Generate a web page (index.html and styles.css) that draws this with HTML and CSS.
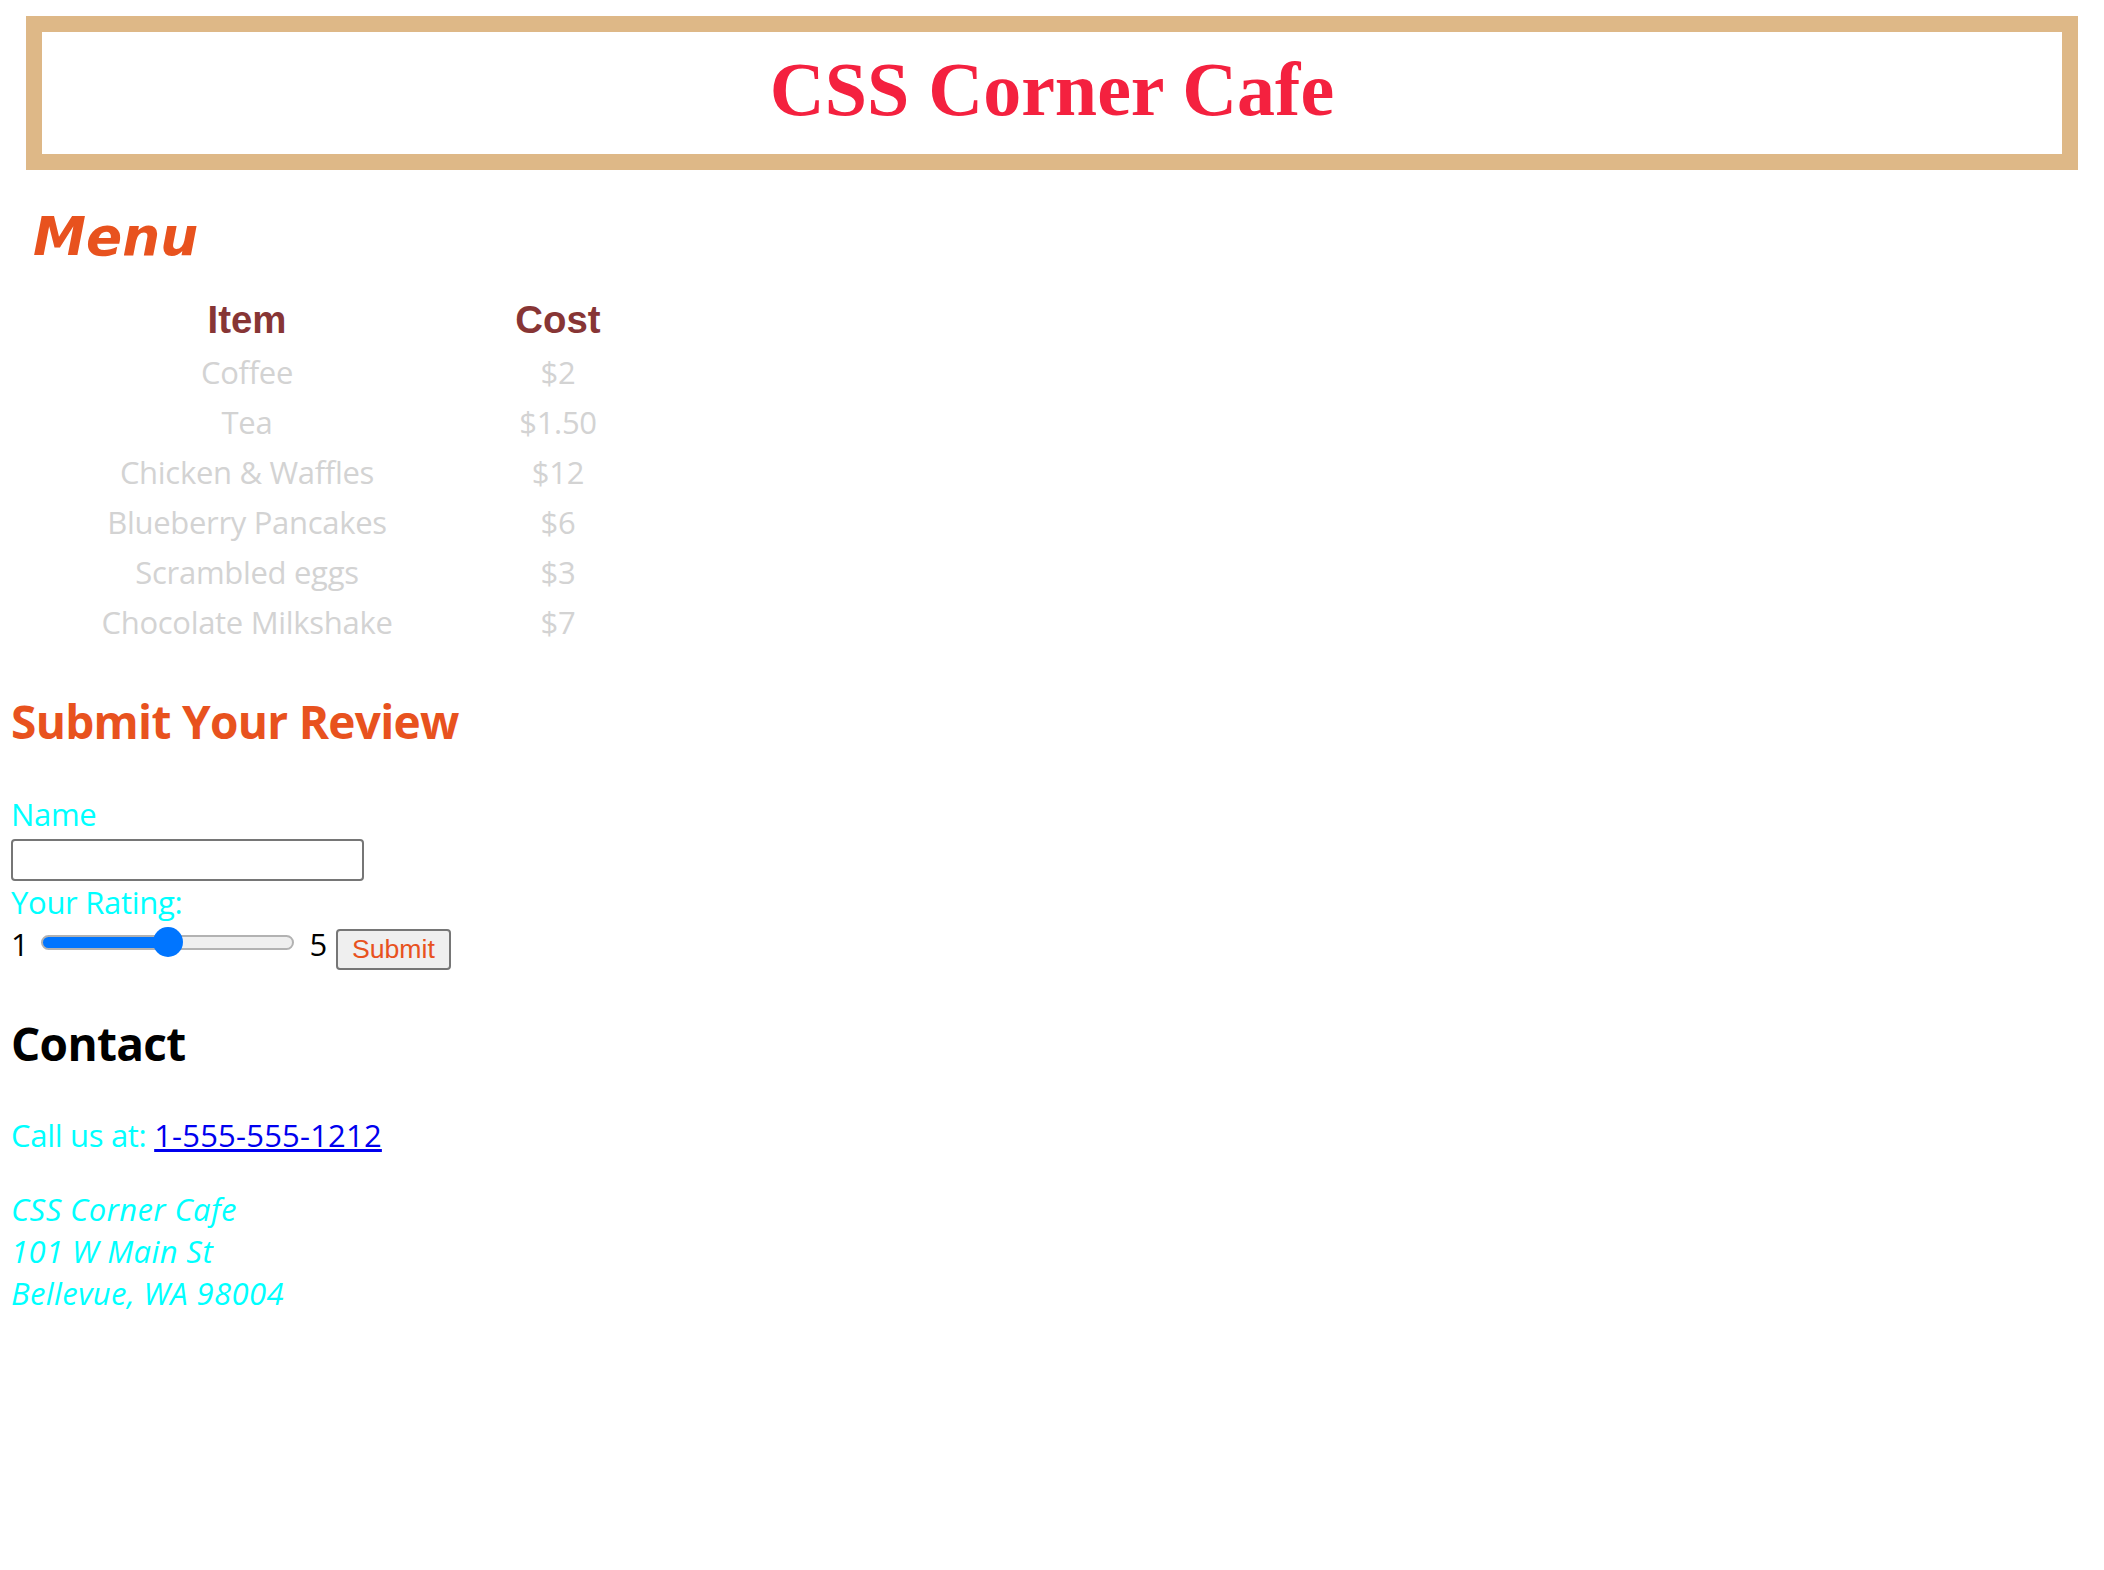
FILE: index.html
```html
<!DOCTYPE html>
<html lang="en">
<head>
<meta charset="utf-8">
<title>CSS Corner Cafe</title>
<link rel="stylesheet" href="styles.css">
</head>
<body>
<header class="banner">
  <h1 class="banner-title">CSS Corner Cafe</h1>
</header>

<section class="menu">
  <h2 class="menu-title">Menu</h2>
  <div class="menu-table">
    <div class="th">Item</div><div class="th">Cost</div>
    <div class="td">Coffee</div><div class="td">$2</div>
    <div class="td">Tea</div><div class="td">$1.50</div>
    <div class="td">Chicken &amp; Waffles</div><div class="td">$12</div>
    <div class="td">Blueberry Pancakes</div><div class="td">$6</div>
    <div class="td">Scrambled eggs</div><div class="td">$3</div>
    <div class="td">Chocolate Milkshake</div><div class="td">$7</div>
  </div>
</section>

<section class="review">
  <h2 class="section-title orange">Submit Your Review</h2>
  <form class="review-form">
    <label class="field-label" for="name">Name</label>
    <input class="text-input" id="name" type="text">
    <label class="field-label" for="rating">Your Rating:</label>
    <div class="rating-row">
      <span class="rating-end">1</span>
      <input class="range" id="rating" type="range" min="1" max="5" value="3">
      <span class="rating-end rating-max">5</span>
      <button class="submit-btn" type="button">Submit</button>
    </div>
  </form>
</section>

<section class="contact">
  <h2 class="section-title">Contact</h2>
  <p class="call">Call us at: <a href="#" class="phone">1-555-555-1212</a></p>
  <address class="address">CSS Corner Cafe<br>101 W Main St<br>Bellevue, WA 98004</address>
</section>
</body>
</html>
```
FILE: styles.css
```css
html, body {
  background: #ffffff;
}
body {
  margin: 0;
  padding: 16px 11px 40px 11px;
  font-family: "Open Sans", "Noto Sans", sans-serif;
  font-size: 31px;
  letter-spacing: -0.3px;
}

/* Banner */
.banner {
  margin: 0 15px;
  height: 122px;
  border: 16px solid #deb887;
}
.banner-title {
  margin: 0;
  text-align: center;
  font-family: "Liberation Serif", "Times New Roman", serif;
  font-weight: 700;
  font-size: 76px;
  line-height: 115px;
  letter-spacing: 0;
  color: #f4213f;
}

/* Menu */
.menu {
  margin: 0 15px;
}
.menu-title {
  margin: 36px 0 0 7px;
  font-family: "DejaVu Sans", Verdana, sans-serif;
  font-weight: 700;
  font-style: italic;
  font-size: 53.3px;
  line-height: 62px;
  letter-spacing: 0;
  color: #e8521e;
}
.menu-table {
  display: grid;
  grid-template-columns: 340px 282px;
  margin: 24px 0 0 51px;
}
.th {
  text-align: center;
  font-family: "Liberation Sans", Arial, sans-serif;
  font-weight: 700;
  font-size: 38.4px;
  line-height: 55.4px;
  letter-spacing: 0;
  color: #873535;
}
.td {
  text-align: center;
  line-height: 50px;
  color: #d3d3d3;
}

/* Review */
.section-title {
  margin: 0;
  font-weight: 700;
  font-size: 46px;
  letter-spacing: -0.7px;
  line-height: 57.6px;
  color: #000000;
}
.orange {
  color: #e8521e;
}
.review {
  margin-top: 46px;
}
.review-form {
  margin-top: 42px;
  display: flex;
  flex-direction: column;
  align-items: flex-start;
}
.field-label {
  color: #00ffff;
  line-height: 42.67px;
}
.text-input {
  box-sizing: border-box;
  width: 353px;
  height: 42px;
  margin: 3px 0 0 0;
  border: 2px solid #767676;
  border-radius: 4px;
  background: #fff;
}
.rating-row {
  display: flex;
  align-items: flex-start;
}
.rating-end {
  color: #000;
  line-height: 42.67px;
}
.range {
  -webkit-appearance: none;
  appearance: none;
  width: 253px;
  height: 30px;
  margin: 4px 0 0 13px;
  padding: 0;
  background: transparent;
}
.range::-webkit-slider-runnable-track {
  height: 15px;
  border-radius: 8px;
  box-sizing: border-box;
  border: 2px solid #b2b2b2;
  background: linear-gradient(to right, #0075ff 0 50%, #efefef 50% 100%);
}
.range::-webkit-slider-thumb {
  -webkit-appearance: none;
  appearance: none;
  width: 30px;
  height: 30px;
  margin-top: -9.5px;
  border-radius: 50%;
  background: #0075ff;
  border: none;
}
.rating-max {
  margin-left: 15px;
}
.submit-btn {
  box-sizing: border-box;
  width: 115px;
  height: 41px;
  margin: 5.5px 0 0 9px;
  padding: 0;
  border: 2px solid #767676;
  border-radius: 4px;
  background: #efefef;
  font-family: "Liberation Sans", Arial, sans-serif;
  font-size: 26.67px;
  letter-spacing: 0;
  color: #e8521e;
}

/* Contact */
.contact {
  margin-top: 45px;
}
.call {
  margin: 42px 0 0 0;
  color: #00ffff;
  line-height: 42.67px;
}
.phone {
  color: #0000ee;
  letter-spacing: 0.2px;
}
.address {
  margin-top: 31px;
  color: #00ffff;
  font-style: italic;
  letter-spacing: 0.4px;
  line-height: 42px;
}
```
